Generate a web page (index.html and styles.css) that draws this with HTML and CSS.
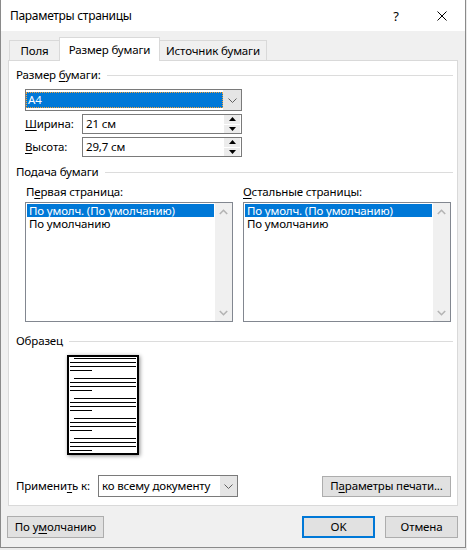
FILE: index.html
```html
<!DOCTYPE html>
<html lang="ru">
<head>
<meta charset="utf-8">
<title>Параметры страницы</title>
<link rel="stylesheet" href="styles.css">
</head>
<body>
<div class="win">
  <div class="titlebar">
    <span class="title">Параметры страницы</span>
    <span class="cap cap-help">?</span>
    <span class="cap cap-close"><svg width="10" height="10" viewBox="0 0 10 10"><path d="M0.5 0.5 L9.5 9.5 M9.5 0.5 L0.5 9.5" stroke="#000" stroke-width="1" fill="none"/></svg></span>
  </div>
  <div class="client">
    <div class="tabs">
      <div class="tab tab-fields">Поля</div>
      <div class="tab tab-active">Размер бумаги</div>
      <div class="tab tab-source">Источник бумаги</div>
    </div>
    <div class="panel">
      <div class="grp"><span>Размер <u>б</u>умаги:</span><span class="grp-line"></span></div>
      <div class="combo combo-size">
        <div class="combo-field"><span class="sel-text">A4</span></div>
        <div class="combo-btn"><svg width="9" height="5" viewBox="0 0 9 5"><path d="M0.5 0.5 L4.5 4.5 L8.5 0.5" fill="none" stroke="#606060" stroke-width="1"/></svg></div>
      </div>
      <div class="frow frow-first">
        <span class="flbl"><u>Ш</u>ирина:</span>
        <div class="spin">
          <span class="spin-val">21 см</span>
          <div class="spin-btns">
            <div class="sb"><svg width="7" height="4" viewBox="0 0 7 4"><path d="M0 4 L3.5 0 L7 4Z" fill="#000"/></svg></div>
            <div class="sb"><svg width="7" height="4" viewBox="0 0 7 4"><path d="M0 0 L3.5 4 L7 0Z" fill="#000"/></svg></div>
          </div>
        </div>
      </div>
      <div class="frow">
        <span class="flbl"><u>В</u>ысота:</span>
        <div class="spin">
          <span class="spin-val">29,7 см</span>
          <div class="spin-btns">
            <div class="sb"><svg width="7" height="4" viewBox="0 0 7 4"><path d="M0 4 L3.5 0 L7 4Z" fill="#000"/></svg></div>
            <div class="sb"><svg width="7" height="4" viewBox="0 0 7 4"><path d="M0 0 L3.5 4 L7 0Z" fill="#000"/></svg></div>
          </div>
        </div>
      </div>
      <div class="grp grp-feed"><span>Подача бумаги</span><span class="grp-line"></span></div>
      <div class="lists">
        <div class="lcol">
          <div class="llbl llbl-first">П<u>е</u>рвая страница:</div>
          <div class="listbox">
            <div class="items">
              <div class="it it-sel">По умолч. (По умолчанию)</div>
              <div class="it">По умолчанию</div>
            </div>
            <div class="vscroll">
              <svg width="9" height="6" viewBox="0 0 9 6"><path d="M0.8 5 L4.5 1.3 L8.2 5" fill="none" stroke="#b4b4b4" stroke-width="1.6"/></svg>
              <svg width="9" height="6" viewBox="0 0 9 6"><path d="M0.8 1 L4.5 4.7 L8.2 1" fill="none" stroke="#b4b4b4" stroke-width="1.6"/></svg>
            </div>
          </div>
        </div>
        <div class="lcol">
          <div class="llbl"><u>О</u>стальные страницы:</div>
          <div class="listbox">
            <div class="items">
              <div class="it it-sel">По умолч. (По умолчанию)</div>
              <div class="it">По умолчанию</div>
            </div>
            <div class="vscroll">
              <svg width="9" height="6" viewBox="0 0 9 6"><path d="M0.8 5 L4.5 1.3 L8.2 5" fill="none" stroke="#b4b4b4" stroke-width="1.6"/></svg>
              <svg width="9" height="6" viewBox="0 0 9 6"><path d="M0.8 1 L4.5 4.7 L8.2 1" fill="none" stroke="#b4b4b4" stroke-width="1.6"/></svg>
            </div>
          </div>
        </div>
      </div>
      <div class="grp grp-sample"><span>Образец</span><span class="grp-line"></span></div>
      <div class="preview">
        <svg width="68" height="96" viewBox="0 0 68 96">
          <g stroke="#000" stroke-width="1">
            <path d="M5 1.5 H67 M1 5.5 H67 M1 9.5 H67 M1 13.5 H23"/>
            <path d="M5 21.5 H67 M1 25.5 H67 M1 29.5 H67 M1 33.5 H23"/>
            <path d="M5 41.5 H67 M1 45.5 H67 M1 49.5 H67 M1 53.5 H23"/>
            <path d="M5 61.5 H67 M1 65.5 H67 M1 69.5 H67 M1 73.5 H23"/>
            <path d="M5 81.5 H67 M1 85.5 H67 M1 89.5 H67 M1 93.5 H23"/>
          </g>
        </svg>
      </div>
      <div class="apply">
        <span class="apply-lbl">Примени<u>т</u>ь к:</span>
        <div class="combo combo-apply">
          <div class="combo-field"><span class="plain-text">ко всему документу</span></div>
          <div class="combo-btn"><svg width="9" height="5" viewBox="0 0 9 5"><path d="M0.5 0.5 L4.5 4.5 L8.5 0.5" fill="none" stroke="#606060" stroke-width="1"/></svg></div>
        </div>
        <div class="btn btn-print">П<u>а</u>раметры печати...</div>
      </div>
    </div>
    <div class="footer">
      <div class="btn btn-default">По у<u>м</u>олчанию</div>
      <div class="btn btn-ok">OK</div>
      <div class="btn btn-cancel">Отмена</div>
    </div>
  </div>
</div>
</body>
</html>
```
FILE: styles.css
```css
html, body {
  margin: 0;
  padding: 0;
}
body {
  background: #ebebeb;
  font-family: "Noto Sans", "Open Sans", sans-serif;
  font-size: 11.5px;
  letter-spacing: -0.15px;
  line-height: 16px;
  color: #000;
}
u {
  text-decoration: underline;
  text-underline-offset: 2px;
}
.win {
  width: 466px;
  height: 548px;
  box-sizing: border-box;
  border: 1px solid #8a8a8a;
  border-top: 0;
  background: #f0f0f0;
  display: flex;
  flex-direction: column;
}
.titlebar {
  height: 31px;
  background: #fff;
  display: flex;
  align-items: center;
  flex: none;
}
.title {
  padding-left: 9px;
  flex: 1;
  padding-top: 1px;
  font-size: 12px;
  letter-spacing: -0.3px;
}
.cap {
  width: 46px;
  height: 31px;
  display: flex;
  align-items: center;
  justify-content: center;
}
.cap-help {
  font-size: 13px;
}
.client {
  flex: 1;
  padding-top: 6px;
}
.tabs {
  display: flex;
  align-items: flex-end;
  padding-left: 8px;
  height: 24px;
  margin-bottom: -1px;
  position: relative;
  z-index: 1;
}
.tab {
  box-sizing: border-box;
  height: 20px;
  margin-bottom: 1px;
  border: 1px solid #d9d9d9;
  border-bottom: 0;
  background: #f0f0f0;
  text-align: center;
  padding-top: 2px;
  line-height: 16px;
}
.tab-fields {
  width: 51px;
}
.tab-active {
  width: 101px;
  height: 24px;
  margin-bottom: 0;
  margin-left: -1px;
  background: #fff;
  padding-top: 4px;
}
.tab-source {
  width: 108px;
  margin-left: -1px;
}
.panel {
  margin: 0 7px;
  height: 446px;
  box-sizing: border-box;
  border: 1px solid #d9d9d9;
  background: #fff;
  padding: 6px 4px 0 7px;
}
.grp {
  display: flex;
  align-items: center;
  height: 16px;
}
.grp-line {
  flex: 1;
  height: 1px;
  background: #dcdcdc;
  margin-left: 6px;
  margin-top: 1px;
}
.grp-feed {
  margin-top: 7px;
}
.grp-sample {
  margin-top: 11px;
}
.combo {
  display: flex;
  box-sizing: border-box;
  height: 22px;
  border: 1px solid #7a7a7a;
  background: #fff;
}
.combo-size {
  margin-top: 6px;
  margin-left: 9px;
  width: 217px;
}
.combo-field {
  flex: 1;
  display: flex;
  padding: 2px 0 2px 0;
}
.sel-text {
  flex: 1;
  background: #0078d7;
  color: #fff;
  padding-left: 2px;
  line-height: 16px;
  outline: 1px dotted #f3a33a;
  outline-offset: -1px;
}
.plain-text {
  padding-left: 3px;
  line-height: 16px;
  white-space: nowrap;
}
.combo-btn {
  width: 18px;
  flex: none;
  background: #e5e5e5;
  display: flex;
  align-items: center;
  justify-content: center;
}
.frow {
  display: flex;
  align-items: center;
  margin-top: 3px;
  margin-left: 9px;
}
.flbl {
  width: 57px;
}
.spin {
  width: 160px;
  height: 20px;
  box-sizing: border-box;
  border: 1px solid #7a7a7a;
  display: flex;
  align-items: center;
}
.spin-val {
  flex: 1;
  padding-left: 3px;
}
.spin-btns {
  width: 16px;
  height: 18px;
  margin-right: 1px;
  display: flex;
  flex-direction: column;
  gap: 1px;
}
.sb {
  flex: 1;
  background: #ececec;
  display: flex;
  align-items: center;
  justify-content: center;
}
.lists {
  display: flex;
  gap: 10px;
  margin-left: 9px;
  margin-top: 4px;
}
.lcol {
  width: 208px;
}
.llbl {
  height: 16px;
  margin-bottom: 2px;
}
.llbl-first {
  padding-left: 1px;
}
.listbox {
  box-sizing: border-box;
  height: 120px;
  border: 1px solid #828790;
  display: flex;
}
.items {
  flex: 1;
  padding: 1px;
}
.it {
  height: 13px;
  line-height: 13px;
  padding-left: 2px;
  white-space: nowrap;
}
.it-sel {
  background: #0078d7;
  color: #fff;
}
.vscroll {
  width: 17px;
  background: #f0f0f0;
  display: flex;
  flex-direction: column;
  align-items: center;
  justify-content: space-between;
  padding: 6px 0 5px;
}
.preview {
  margin-top: 6px;
  margin-left: 51px;
  width: 72px;
  height: 100px;
  box-sizing: border-box;
  border: 2px solid #000;
  background: #fff;
  box-shadow: 1px 1px 4px rgba(0, 0, 0, 0.45);
}
.preview svg {
  display: block;
}
.apply {
  display: flex;
  align-items: center;
  margin-top: 20px;
}
.apply-lbl {
  width: 82px;
}
.combo-apply {
  width: 140px;
}
.combo-apply .combo-btn {
  width: 17px;
}
.btn {
  box-sizing: border-box;
  height: 22px;
  border: 1px solid #adadad;
  background: #e1e1e1;
  display: flex;
  align-items: center;
  justify-content: center;
  white-space: nowrap;
}
.btn-print {
  margin-left: auto;
  margin-right: 2px;
  width: 129px;
  height: 21px;
}
.footer {
  display: flex;
  margin-top: 10px;
  padding: 0 7px 0 6px;
  gap: 10px;
}
.btn-default {
  width: 97px;
  margin-right: auto;
}
.btn-ok {
  width: 73px;
  border: 2px solid #0078d7;
}
.btn-cancel {
  width: 73px;
}
```
